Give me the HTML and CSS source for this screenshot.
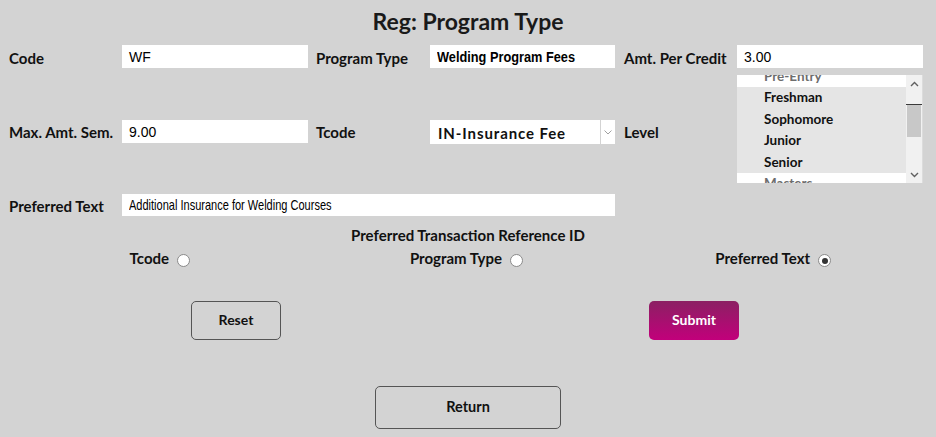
FILE: index.html
```html
<!DOCTYPE html>
<html>
<head>
<meta charset="utf-8">
<link rel="stylesheet" href="styles.css">
</head>
<body>
<h1 class="title">Reg: Program Type</h1>
<div class="grid">
  <div class="lbl r1">Code</div>
  <div class="field r1"><div class="inp w186 mono">WF</div></div>
  <div class="lbl r1">Program Type</div>
  <div class="field r1"><div class="inp w185"><span class="semi">Welding Program Fees</span></div></div>
  <div class="lbl r1">Amt. Per Credit</div>
  <div class="field r1"><div class="inp w186 mono">3.00</div></div>

  <div class="lbl r2">Max. Amt. Sem.</div>
  <div class="field r2"><div class="inp w186 mono">9.00</div></div>
  <div class="lbl r2">Tcode</div>
  <div class="field r2">
    <div class="select">
      <span class="sel-text">IN-Insurance Fee</span>
      <span class="sel-btn"><svg width="8" height="5" viewBox="0 0 8 5"><path d="M0.5 0.5 L4 4 L7.5 0.5" fill="none" stroke="#a0a0a0" stroke-width="1"/></svg></span>
    </div>
  </div>
  <div class="lbl r2">Level</div>
  <div class="field r2 listcell">
    <div class="listbox">
      <div class="opts">
        <div class="opt dis">Pre-Entry</div>
        <div class="opt sel">Freshman</div>
        <div class="opt sel">Sophomore</div>
        <div class="opt sel">Junior</div>
        <div class="opt sel">Senior</div>
        <div class="opt dis">Masters</div>
      </div>
      <div class="sbar">
        <div class="sb-btn"><svg width="9" height="6" viewBox="0 0 9 6"><path d="M1 5 L4.5 1.5 L8 5" fill="none" stroke="#606060" stroke-width="1.4"/></svg></div>
        <div class="sb-track"><div class="sb-line"></div><div class="sb-thumb"></div></div>
        <div class="sb-btn"><svg width="9" height="6" viewBox="0 0 9 6"><path d="M1 1 L4.5 4.5 L8 1" fill="none" stroke="#606060" stroke-width="1.4"/></svg></div>
      </div>
    </div>
  </div>

  <div class="lbl r3">Preferred Text</div>
  <div class="field r3 wide"><div class="inp w493"><span class="narrow">Additional Insurance for Welding Courses</span></div></div>
</div>

<div class="ref-title">Preferred Transaction Reference ID</div>
<div class="radios">
  <div class="rcell"><span class="rlbl">Tcode</span><span class="radio"></span></div>
  <div class="rcell"><span class="rlbl">Program Type</span><span class="radio"></span></div>
  <div class="rcell"><span class="rlbl">Preferred Text</span><span class="radio on"></span></div>
</div>

<div class="actions">
  <button class="btn plain">Reset</button>
  <button class="btn submit">Submit</button>
</div>
<div class="ret-row">
  <button class="btn plain ret">Return</button>
</div>
</body>
</html>
```
FILE: styles.css
```css
html, body {
  margin: 0;
  padding: 0;
}
body {
  background: #d3d3d3;
  width: 936px;
  height: 437px;
  overflow: hidden;
  font-family: Lato, "Liberation Sans", sans-serif;
  color: #111;
  padding: 0 8px;
  box-sizing: border-box;
}
.title {
  margin: 0;
  padding-top: 8px;
  height: 45px;
  box-sizing: border-box;
  text-align: center;
  font-size: 23px;
  font-weight: 700;
  line-height: 26px;
  color: #1a1a1a;
}
.grid {
  display: grid;
  grid-template-columns: 113px 194px 114px 194px 113px 186px;
  grid-template-rows: 30px 108px 33px;
  padding-left: 1px;
}
.lbl {
  font-size: 15px;
  font-weight: 700;
  display: flex;
  align-items: center;
  white-space: nowrap;
}
.r1.lbl { height: 23px; padding-top: 3px; box-sizing: border-box; }
.r2.lbl { height: 23px; margin-top: 45px; padding-top: 1px; box-sizing: border-box; }
.r3.lbl { height: 22px; margin-top: 11px; padding-top: 1px; box-sizing: border-box; }
.field.r2 { margin-top: 45px; }
.field.r3 { margin-top: 11px; }
.listcell { margin-top: 0 !important; }
.wide { grid-column: 2 / span 3; }
.inp {
  background: #fff;
  height: 23px;
  box-sizing: border-box;
  padding: 0 7px;
  display: flex;
  align-items: center;
  font-size: 14px;
  color: #000;
  white-space: nowrap;
}
.w186 { width: 186px; }
.w185 { width: 185px; }
.w493 { width: 493px; height: 22px; }
.mono { font-family: "Liberation Sans", Arial, sans-serif; font-size: 14px; }
.semi {
  display: inline-block;
  font-family: "Liberation Sans", Arial, sans-serif;
  font-weight: 700;
  font-size: 14.5px;
  transform: scaleX(0.88);
  transform-origin: left center;
}
.narrow {
  display: inline-block;
  font-family: "Liberation Sans", Arial, sans-serif;
  font-size: 14.5px;
  transform: scaleX(0.76);
  transform-origin: left center;
}
.select {
  width: 185px;
  height: 24px;
  background: #fff;
  display: flex;
  align-items: stretch;
  box-sizing: border-box;
}
.sel-text {
  flex: 1;
  padding-left: 8px;
  padding-top: 2px;
  display: flex;
  align-items: center;
  font-size: 15px;
  letter-spacing: 0.9px;
  font-weight: 700;
  color: #111;
  white-space: nowrap;
}
.sel-btn {
  width: 14px;
  border-left: 1px solid #d3d3d3;
  display: flex;
  align-items: center;
  justify-content: center;
}
.listbox {
  width: 186px;
  height: 108px;
  background: #fff;
  display: flex;
  overflow: hidden;
}
.opts {
  flex: 1;
  margin-top: -9px;
}
.opt {
  height: 21.4px;
  line-height: 21.4px;
  padding-left: 27px;
  font-size: 13.5px;
  font-weight: 700;
  color: #111;
}
.opt.sel { background: #e5e5e5; }
.opt.dis { color: #6d6d6d; }
.sbar {
  width: 17px;
  background: #f1f1f1;
  display: flex;
  flex-direction: column;
  border-right: 1px solid #dcdcdc;
  box-sizing: border-box;
}
.sb-btn {
  height: 17px;
  display: flex;
  align-items: center;
  justify-content: center;
}
.sb-track {
  flex: 1;
}
.sb-line {
  height: 12px;
  border-bottom: 1px solid #3a3a3a;
}
.sb-thumb {
  margin: 0 1px;
  height: 32px;
  background: #c8c8c8;
}
.ref-title {
  margin-top: 10px;
  text-align: center;
  font-size: 15px;
  font-weight: 700;
  height: 18px;
  line-height: 18px;
}
.radios {
  display: grid;
  grid-template-columns: 1fr 1fr 1fr;
  margin-top: 4px;
  height: 20px;
}
.rcell {
  text-align: center;
  font-size: 15px;
  font-weight: 700;
  line-height: 20px;
}
.radio {
  display: inline-block;
  width: 13px;
  height: 13px;
  box-sizing: border-box;
  border: 1px solid #8a8a8a;
  border-radius: 50%;
  background: #fff;
  margin: 0 3px 0 8px;
  vertical-align: -3px;
  position: relative;
}
.radio.on::after {
  content: "";
  position: absolute;
  left: 2.5px;
  top: 2.5px;
  width: 6px;
  height: 6px;
  border-radius: 50%;
  background: #333;
}
.actions {
  display: flex;
  margin-top: 33px;
  padding-left: 183px;
  gap: 368px;
}
.btn {
  width: 90px;
  height: 39px;
  border-radius: 5px;
  font-family: Lato, sans-serif;
  font-size: 14px;
  font-weight: 700;
  color: #111;
  cursor: pointer;
  padding: 0 0 2px;
}
.plain {
  background: transparent;
  border: 1px solid #555;
}
.submit {
  border: none;
  color: #fff;
  background: linear-gradient(#8b2063, #c2007b);
}
.ret-row {
  display: flex;
  justify-content: center;
  margin-top: 46px;
}
.ret {
  width: 186px;
  height: 43px;
  font-size: 14.5px;
}
```
